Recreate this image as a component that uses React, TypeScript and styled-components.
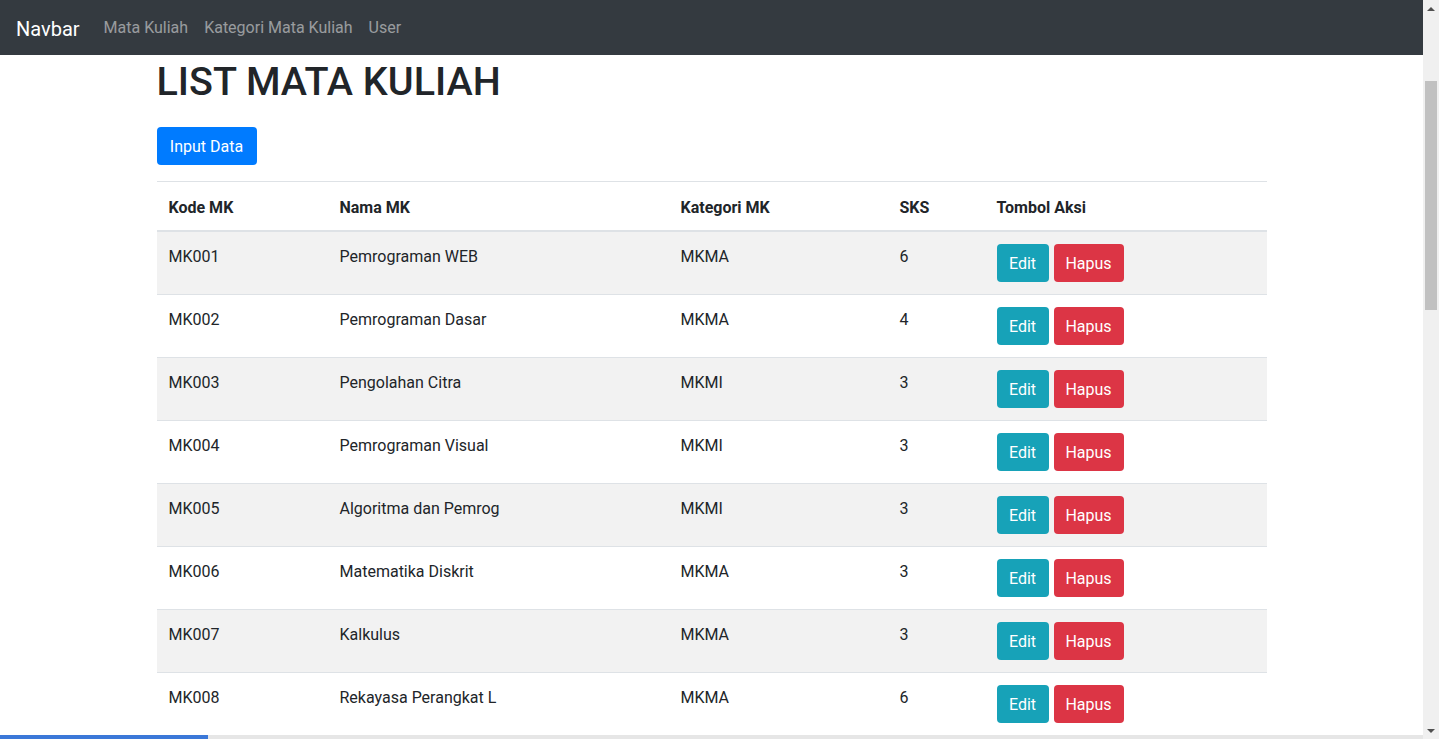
import React from "react";
import styled, { createGlobalStyle } from "styled-components";

const GlobalStyle = createGlobalStyle`
  html, body { margin: 0; padding: 0; }
  body {
    font-family: Roboto, "Liberation Sans", Arial, sans-serif;
    font-size: 16px;
    line-height: 1.5;
    color: #212529;
    background: #fff;
    overflow: hidden;
  }
  * { box-sizing: border-box; }
`;

const Viewport = styled.div`
  display: flex;
  width: 1439px;
  height: 739px;
  overflow: hidden;
  position: relative;
`;

const Page = styled.div`
  flex: 1;
  min-width: 0;
  overflow: hidden;
`;

const Navbar = styled.nav`
  display: flex;
  align-items: center;
  height: 55px;
  padding: 0 16px;
  background: #343a40;
`;

const Brand = styled.a`
  font-size: 20px;
  line-height: 30px;
  padding-top: 2px;
  color: #fff;
  margin-right: 16px;
  text-decoration: none;
`;

const NavLinks = styled.div`
  display: flex;
`;

const NavLink = styled.a`
  padding: 8px;
  color: rgba(255, 255, 255, 0.5);
  text-decoration: none;
  font-size: 16px;
`;

const Container = styled.div`
  width: 1140px;
  margin: 0 auto;
  padding: 0 15px;
`;

const Title = styled.h1`
  margin: 3px 0 21px;
  font-size: 39.5px;
  font-weight: 500;
  line-height: 48px;
`;

const Button = styled.button<{ $variant: "primary" | "info" | "danger"; $w: number }>`
  display: inline-flex;
  align-items: center;
  justify-content: center;
  width: ${(p) => p.$w}px;
  height: 38px;
  padding: 2px 0 0;
  border: 1px solid transparent;
  border-radius: 4px;
  font-family: inherit;
  font-size: 16px;
  line-height: 24px;
  color: #fff;
  cursor: pointer;
  background: ${(p) =>
    p.$variant === "primary" ? "#007bff" : p.$variant === "info" ? "#17a2b8" : "#dc3545"};
`;

const Table = styled.table`
  width: 1110px;
  margin-top: 16px;
  border-collapse: collapse;
  table-layout: fixed;
`;

const Th = styled.th<{ $w: number }>`
  width: ${(p) => p.$w}px;
  text-align: left;
  font-weight: 700;
  padding: 14px 12px 10px;
  line-height: 24px;
  border-top: 1px solid #dee2e6;
  border-bottom: 2px solid #dee2e6;
  vertical-align: bottom;
`;

const Row = styled.tr<{ $striped: boolean }>`
  background: ${(p) => (p.$striped ? "#f2f2f2" : "transparent")};
`;

const Td = styled.td<{ $action?: boolean }>`
  padding: ${(p) => (p.$action ? "12px" : "13px 12px 11px")};
  line-height: 24px;
  vertical-align: top;
  border-top: 1px solid #dee2e6;
`;

const Actions = styled.div`
  display: flex;
  gap: 5px;
`;

const ScrollTrack = styled.div`
  width: 16px;
  height: 739px;
  background: #f0f0f0;
  display: flex;
  flex-direction: column;
  align-items: center;
`;

const Arrow = styled.div<{ $down?: boolean }>`
  width: 16px;
  height: 17px;
  display: flex;
  align-items: center;
  justify-content: center;
  &::after {
    content: "";
    width: 0;
    height: 0;
    border-left: 4px solid transparent;
    border-right: 4px solid transparent;
    ${(p) => (p.$down ? "border-top: 4px solid #505050;" : "border-bottom: 4px solid #505050;")}
  }
`;

const ThumbArea = styled.div`
  flex: 1;
  width: 100%;
  padding: 64px 2px 0;
`;

const Thumb = styled.div`
  height: 229px;
  background: #c1c1c1;
`;

const LoadBar = styled.div`
  position: absolute;
  left: 0;
  bottom: 0;
  width: 1423px;
  height: 4px;
  background: #e6e6e6;
`;

const LoadFill = styled.div`
  height: 100%;
  background: #3b78d8;
`;

const rows = [
  ["MK001", "Pemrograman WEB", "MKMA", "6"],
  ["MK002", "Pemrograman Dasar", "MKMA", "4"],
  ["MK003", "Pengolahan Citra", "MKMI", "3"],
  ["MK004", "Pemrograman Visual", "MKMI", "3"],
  ["MK005", "Algoritma dan Pemrog", "MKMI", "3"],
  ["MK006", "Matematika Diskrit", "MKMA", "3"],
  ["MK007", "Kalkulus", "MKMA", "3"],
  ["MK008", "Rekayasa Perangkat L", "MKMA", "6"],
];

export default function App() {
  return (
    <>
      <GlobalStyle />
      <Viewport>
        <Page>
          <Navbar>
            <Brand href="#">Navbar</Brand>
            <NavLinks>
              <NavLink href="#">Mata Kuliah</NavLink>
              <NavLink href="#">Kategori Mata Kuliah</NavLink>
              <NavLink href="#">User</NavLink>
            </NavLinks>
          </Navbar>
          <Container>
            <Title>LIST MATA KULIAH</Title>
            <Button $variant="primary" $w={100}>Input Data</Button>
            <Table>
              <thead>
                <tr>
                  <Th $w={171}>Kode MK</Th>
                  <Th $w={341}>Nama MK</Th>
                  <Th $w={219}>Kategori MK</Th>
                  <Th $w={97}>SKS</Th>
                  <Th $w={282}>Tombol Aksi</Th>
                </tr>
              </thead>
              <tbody>
                {rows.map((r, i) => (
                  <Row key={r[0]} $striped={i % 2 === 0}>
                    <Td>{r[0]}</Td>
                    <Td>{r[1]}</Td>
                    <Td>{r[2]}</Td>
                    <Td>{r[3]}</Td>
                    <Td $action>
                      <Actions>
                        <Button $variant="info" $w={52}>Edit</Button>
                        <Button $variant="danger" $w={70}>Hapus</Button>
                      </Actions>
                    </Td>
                  </Row>
                ))}
              </tbody>
            </Table>
          </Container>
        </Page>
        <ScrollTrack>
          <Arrow />
          <ThumbArea>
            <Thumb />
          </ThumbArea>
          <Arrow $down />
        </ScrollTrack>
        <LoadBar>
          <LoadFill style={{ width: "208px" }} />
        </LoadBar>
      </Viewport>
    </>
  );
}
